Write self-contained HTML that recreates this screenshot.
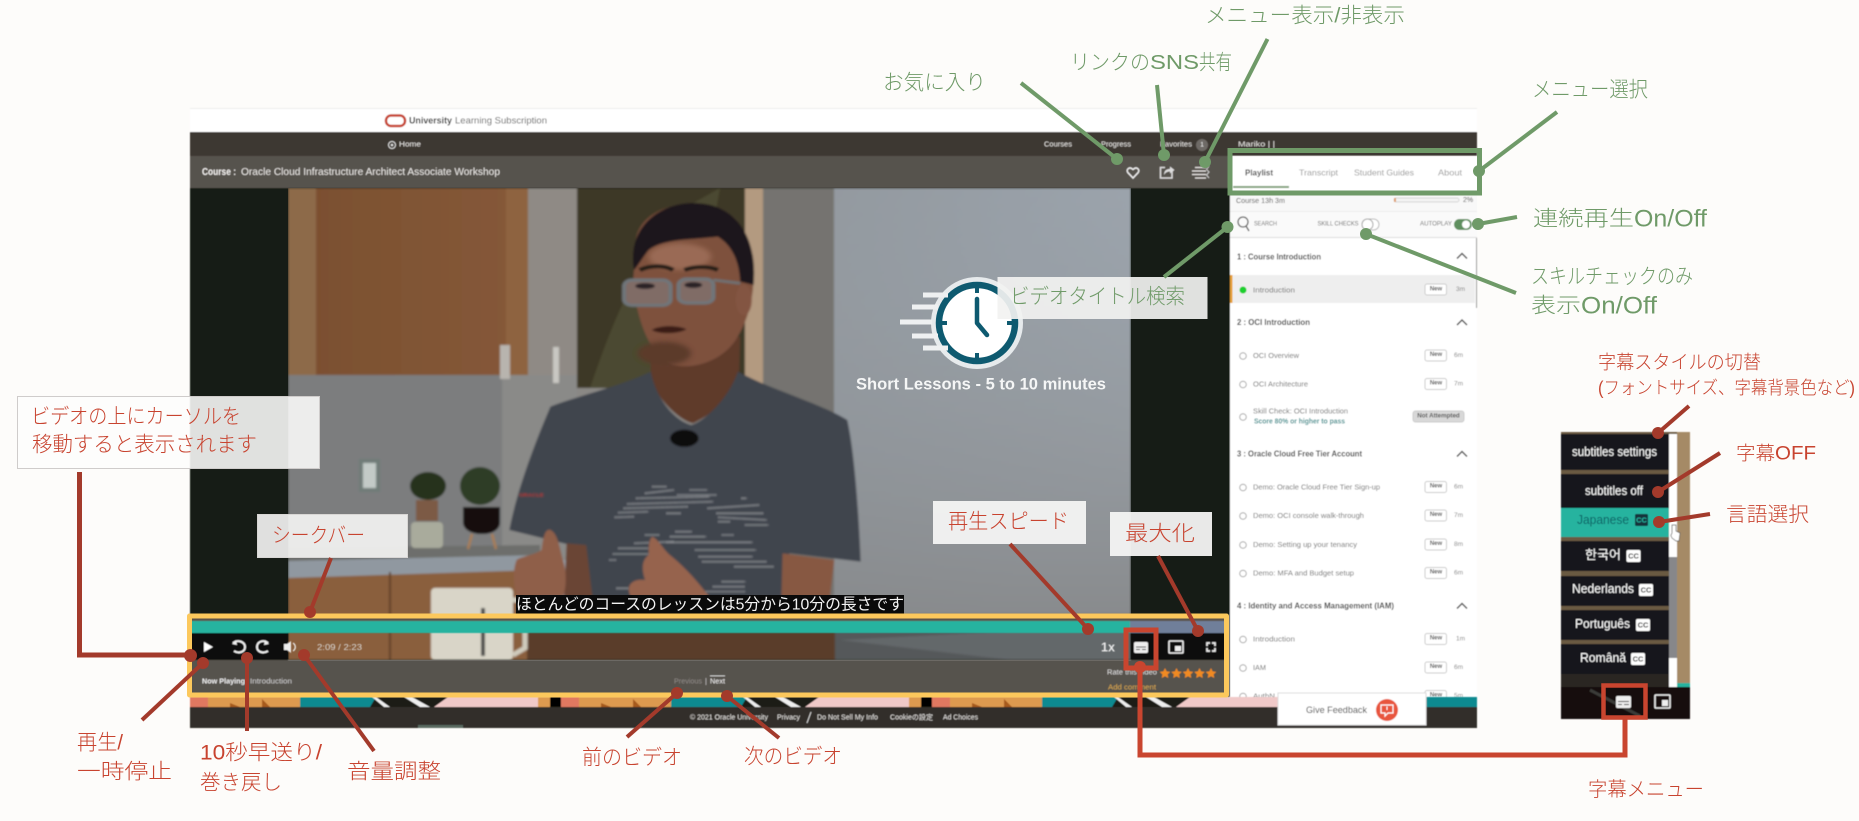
<!DOCTYPE html>
<html lang="ja"><head><meta charset="utf-8"><title>Video player guide</title>
<style>
html,body{margin:0;padding:0;width:1859px;height:821px;overflow:hidden;background:#fdfcfa}
svg{display:block}
text{font-family:"Liberation Sans","Noto Sans CJK JP",sans-serif;dominant-baseline:central}
.a{font-size:21px;font-weight:300}
.r{fill:#c8432f}.g{fill:#6f9a68}
.s{font-size:7.5px;fill:#707070}
.h{font-size:8px;fill:#444;font-weight:700}
.n{font-size:7px;fill:#e8e6e3}
.b{font-size:6px;font-weight:700;fill:#555;text-anchor:middle}
.t{font-size:6.5px;fill:#808080}
.m{font-size:12.5px;fill:#fff}
</style></head><body>
<svg width="1859" height="821" viewBox="0 0 1859 821" xmlns="http://www.w3.org/2000/svg">
<defs>
<filter id="f1" x="-5%" y="-5%" width="110%" height="110%"><feGaussianBlur stdDeviation="1.1"/></filter>
<filter id="f2" x="-5%" y="-5%" width="110%" height="110%"><feGaussianBlur stdDeviation="0.4"/></filter>
<filter id="f3" x="-30%" y="-30%" width="160%" height="160%"><feGaussianBlur stdDeviation="6"/></filter>
<linearGradient id="wall" x1="0" y1="0" x2="1" y2="0.6"><stop offset="0" stop-color="#85878a"/><stop offset="0.7" stop-color="#9aa2aa"/><stop offset="1" stop-color="#a2abb4"/></linearGradient>
<linearGradient id="wall2" x1="0" y1="0" x2="0" y2="1"><stop offset="0" stop-color="#8a8d90" stop-opacity="0"/><stop offset="1" stop-color="#808080" stop-opacity=".85"/></linearGradient>
<linearGradient id="wood" x1="0" y1="0" x2="1" y2="0"><stop offset="0" stop-color="#7a4f2e"/><stop offset="1" stop-color="#86593a"/></linearGradient>
<clipPath id="vid"><rect x="288" y="188" width="843" height="472"/></clipPath>
<clipPath id="stripc"><rect x="190" y="697" width="1287" height="10"/></clipPath>
</defs>

<rect width="1859" height="821" fill="#fdfcfa"/>

<!-- page frame -->
<g filter="url(#f2)">
<rect x="190" y="108" width="1287" height="1" fill="#eeeeec"/>
<rect x="190" y="109" width="1287" height="23" fill="#fff"/>
<rect x="190" y="132" width="1287" height="24" fill="#3c3733"/>
<rect x="190" y="156" width="1040" height="32" fill="#57524e"/>
<rect x="190" y="188" width="1040" height="472" fill="#141a16"/>
<rect x="386" y="115.500" width="19" height="10.500" rx="5" fill="none" stroke="#c74634" stroke-width="2.500"/>
<text x="409" y="121" font-size="9.500" font-weight="700" fill="#333" textLength="43" lengthAdjust="spacingAndGlyphs">University</text>
<text x="455" y="121" font-size="9.500" fill="#666" textLength="92" lengthAdjust="spacingAndGlyphs">Learning Subscription</text>
<circle cx="392" cy="145" r="3.500" fill="none" stroke="#ddd" stroke-width="1"/><circle cx="392" cy="145" r="1.300" fill="#ddd"/>
<text class="n" x="399" y="145" textLength="22" lengthAdjust="spacingAndGlyphs">Home</text>
<text class="n" x="1044" y="145" textLength="28" lengthAdjust="spacingAndGlyphs">Courses</text>
<text class="n" x="1101" y="145" textLength="30" lengthAdjust="spacingAndGlyphs">Progress</text>
<text class="n" x="1160" y="145" textLength="32" lengthAdjust="spacingAndGlyphs">Favorites</text>
<circle cx="1202" cy="145" r="6" fill="#6e6a66"/><text x="1202" y="145" font-size="6.500" fill="#eee" text-anchor="middle">1</text>
<text class="n" x="1238" y="145" textLength="37" lengthAdjust="spacingAndGlyphs">Mariko | |</text>
<text x="202" y="172" font-size="10.500" font-weight="700" fill="#f2f0ee" textLength="34" lengthAdjust="spacingAndGlyphs">Course :</text>
<text x="241" y="172" font-size="10.500" fill="#e8e6e3" textLength="259" lengthAdjust="spacingAndGlyphs">Oracle Cloud Infrastructure Architect Associate Workshop</text>
<path d="M1133 178 L1127.800 172.500 C1125.800 169.500 1129.500 166 1133 169.500 C1136.500 166 1140.200 169.500 1138.200 172.500 Z" fill="none" stroke="#eee" stroke-width="1.500"/>
<path d="M1172 171 V178 H1160.500 V167.500 H1165" fill="none" stroke="#ddd" stroke-width="1.500"/>
<path d="M1164 175 C1164 170 1167 169 1170 169 V166.500 L1174.500 170 L1170 173.500 V171.500 C1168 171.500 1165.500 172 1164 175 Z" fill="#ddd"/>
<path d="M1195 167.500 H1206 M1192 171 H1206 M1192 174.500 H1206 M1195 178 H1206" stroke="#e8e6e3" stroke-width="1.300"/>
<path d="M1209 166 L1206.500 169.500 L1209 172 L1206.500 175 L1209 178" fill="none" stroke="#ccc" stroke-width="1"/>
</g>

<!-- video content -->
<g clip-path="url(#vid)">
<g filter="url(#f1)">
<rect x="288" y="188" width="843" height="472" fill="url(#wall)"/>
<rect x="834" y="188" width="297" height="472" fill="url(#wall2)"/>
<rect x="528" y="188" width="49" height="210" fill="#8f8a85"/>
<rect x="288" y="375" width="214" height="185" fill="#7c7d7e"/>
<rect x="502" y="375" width="75" height="185" fill="#8a8a88"/>
<rect x="577" y="188" width="168" height="200" fill="#3d3727"/>
<path d="M590 388 C620 300 640 260 690 205 L720 188 L700 300 L660 388Z" fill="#4b4a30"/>
<rect x="745" y="188" width="18" height="210" fill="#b39a80"/>
<rect x="763" y="188" width="71" height="472" fill="#75736f"/>
<rect x="577" y="388" width="186" height="200" fill="#8a8885"/>
<rect x="288" y="188" width="240" height="187" fill="url(#wood)"/>
<rect x="288" y="188" width="28" height="187" fill="#8d6a48"/>
<rect x="506" y="188" width="22" height="187" fill="#8e643f"/>
<path d="M288 548 L540 545 V556 L288 562Z" fill="#6d6e6c"/>
<path d="M288 561 L540 555 V570 L288 578Z" fill="#9098a0"/>
<path d="M288 578 L540 570 V660 H288Z" fill="#8a5f3c"/>
<rect x="389" y="572" width="2" height="88" fill="#5f4028"/>
<rect x="500" y="345" width="10" height="34" fill="#b8b4ae"/>
<rect x="553" y="347" width="6" height="36" fill="#c9c7c2"/>
<rect x="359" y="459" width="21" height="33" fill="#6f7c78"/>
<rect x="363" y="463" width="13" height="25" fill="#c3cac7"/>
<!-- plants -->
<ellipse cx="428" cy="486" rx="18" ry="14" fill="#26331f"/>
<rect x="416" y="500" width="22" height="21" fill="#7c5a44"/>
<rect x="411" y="522" width="32" height="26" rx="4" fill="#a9ab9c"/>
<ellipse cx="480" cy="486" rx="20" ry="19" fill="#2f3e28"/>
<path d="M463 507 H500 V522 C500 530 492 534 482 534 C472 534 463 530 463 522Z" fill="#15110f"/>
<path d="M472 534 L468 549 M492 534 L496 549" stroke="#a97d55" stroke-width="2.500"/>
<!-- person: head, neck, shirt -->
<g transform="translate(450,190) scale(.4464,.3333)">
<path d="M450 480 L450 570 C470 640 520 695 545 700 C590 670 640 620 648 540 L650 440Z" fill="#5f3b2c"/>
<path d="M450 545 C380 590 280 620 225 650 C190 760 150 900 133 1020 L300 1075 L325 1300 L750 1300 L760 1090 L920 1115 C915 950 905 780 890 690 C830 640 720 600 645 545 C620 640 560 700 540 705 C500 690 460 620 450 545Z" fill="#3f444d"/>
<path d="M415 180 C410 70 500 35 560 40 C640 50 680 130 680 260 C680 330 665 400 640 450 C610 510 550 540 500 525 C450 500 420 400 410 280Z" fill="#7e513d"/>
<ellipse cx="515" cy="200" rx="70" ry="40" fill="#9a6a54" filter="url(#f3)"/>
<ellipse cx="480" cy="490" rx="60" ry="35" fill="#5c3a2c" filter="url(#f3)"/>
<ellipse cx="658" cy="330" rx="18" ry="46" fill="#835542"/>
<path d="M412 240 C395 100 480 30 560 40 C640 48 690 140 680 285 L650 275 C648 210 630 165 600 140 C540 150 480 145 445 180 C430 205 420 230 412 240Z" fill="#1b191b"/>
<path d="M425 240 C450 225 480 225 500 240 M525 240 C550 228 580 228 600 240" fill="none" stroke="#221a18" stroke-width="12"/>
<rect x="390" y="270" width="104" height="76" rx="18" fill="#806c66" stroke="#6f767a" stroke-width="9"/>
<rect x="512" y="267" width="78" height="72" rx="18" fill="#806c66" stroke="#6f767a" stroke-width="9"/>
<path d="M590 270 L650 280" stroke="#6e7274" stroke-width="8"/>
<ellipse cx="437" cy="288" rx="22" ry="9" fill="#2c2426"/><ellipse cx="545" cy="285" rx="20" ry="9" fill="#2c2426"/>
<path d="M452 420 C470 405 510 405 530 418 C510 432 470 434 452 420Z" fill="#3a1a18"/>
<ellipse cx="525" cy="745" rx="32" ry="26" fill="#111"/>
<text x="155" y="917" font-size="13" font-weight="700" fill="#b5342c">ORACLE</text>
</g>
<!-- arm, shirt print and hands -->
<g transform="translate(288,380) scale(.3571,.3333)">
<path d="M780 490 L835 495 L860 720 L770 720Z" fill="#6a4534"/>
<path d="M1385 520 L1530 540 L1510 720 H1380Z" fill="#875842"/>
<g fill="none" stroke="#c8cacc" stroke-width="4" stroke-dasharray="4 3" opacity=".8">
<path d="M1020 320 H1060 M1000 340 L1080 330 M975 355 L1180 350 M950 372 L1190 365 M940 385 L1120 380 M925 398 L1010 395 M915 412 L970 410 M1125 330 H1175 M1090 345 H1200 M1270 355 H1285 M1175 385 L1320 375 M1200 400 H1330 M1205 412 L1340 420 M1205 425 H1240 M1280 435 H1345 M1060 400 H1100"/>
<path d="M1000 465 H1040 M1085 455 H1130 M1070 470 H1170 M1215 465 H1250 M970 490 L1080 485 M1060 487 H1300 M925 505 L1020 505 M1140 510 H1310 M910 522 H1010 M1150 530 H1300 M1160 545 H1340 M1250 560 H1360 M900 540 H920 M1215 605 H1280 M1190 620 H1280 M920 625 H1000 M1170 635 H1280"/>
</g>
<path d="M640 540 C650 530 690 525 710 510 C715 470 720 445 735 450 C755 460 760 500 770 540 C785 590 775 640 770 650 H640 C630 600 630 570 640 540Z" fill="#8f5f4a"/>
<path d="M1020 470 C1040 480 1050 510 1075 530 C1120 570 1150 610 1180 650 H960 C945 620 960 595 1000 600 C990 570 990 540 1010 525 C1010 500 1010 480 1020 470Z" fill="#96634e"/>
</g>
<!-- lower zone and mug -->
<rect x="527" y="614" width="308" height="46" fill="#5a3c2c"/>
<rect x="835" y="614" width="296" height="46" fill="#55585a"/>
<path d="M840 640 L1010 660 H1131 V625Z" fill="#63676a"/>
<rect x="431" y="588" width="82" height="72" rx="4" fill="#d9d5c8"/>
<path d="M513 600 H525 V648 L513 655" fill="none" stroke="#cfcabc" stroke-width="5"/>
<rect x="481" y="608" width="4" height="48" fill="#4a4a48"/>
</g>
<circle cx="977" cy="323" r="46" fill="#e6eaec"/>
<circle cx="977" cy="323" r="38" fill="#fff" stroke="#0e5a70" stroke-width="6.500"/>
<path d="M977 285 V293 M977 353 V361 M939 323 H947 M1007 323 H1015" stroke="#0e5a70" stroke-width="4"/>
<path d="M977 299 V323 L987 335" fill="none" stroke="#0e5a70" stroke-width="4.500" stroke-linecap="round" stroke-linejoin="round"/>
<path d="M923 295 H948 M912 307 H938 M900 322 H932 M912 336 H938 M923 348 H948" stroke="#eef0f1" stroke-width="5"/>
<text x="856" y="384" font-size="17" font-weight="700" fill="#f5f6f6" textLength="250" lengthAdjust="spacingAndGlyphs">Short Lessons - 5 to 10 minutes</text>
</g>

<!-- subtitle -->
<rect x="516" y="595" width="388" height="21" fill="#0a0a0a"/>
<text x="516" y="605" font-size="16" fill="#f4f4f4" textLength="388" lengthAdjust="spacingAndGlyphs">ほとんどのコースのレッスンは5分から10分の長さです</text>

<!-- controls -->
<g filter="url(#f2)">
<rect x="190" y="633" width="98" height="27" fill="#0a0a0a"/>
<rect x="1131" y="633" width="97" height="27" fill="#0a0a0a"/>
<rect x="190" y="616" width="1038" height="5" fill="#5c5248"/>
<rect x="190" y="621" width="940" height="12" fill="#25b39f"/>
<rect x="1130" y="621" width="98" height="12" fill="#6f7f9a"/>
<path d="M204 642 L213 647 L204 652Z" fill="#fff"/>
<path d="M233 643 C238 639 245 642 245 647 C245 652 239 654 234 651" fill="none" stroke="#eee" stroke-width="2"/><path d="M236 640 L232 644 L237 645Z" fill="#eee"/>
<path d="M268 643 C263 639 257 642 257 647 C257 652 263 654 268 651" fill="none" stroke="#eee" stroke-width="2"/><path d="M265 640 L269 644 L264 645Z" fill="#eee"/>
<path d="M284 644 H287 L291 641 V653 L287 650 H284Z" fill="#eee"/><path d="M293 643 C296 645 296 649 293 651" fill="none" stroke="#eee" stroke-width="1.300"/>
<text x="317" y="647" font-size="8.500" fill="#ddd" textLength="45" lengthAdjust="spacingAndGlyphs">2:09  /  2:23</text>
<text x="1101" y="647" font-size="13" fill="#e8e8e8" font-weight="700" textLength="14" lengthAdjust="spacingAndGlyphs">1x</text>
<rect x="1134" y="642" width="14" height="11" rx="1.500" fill="#eee"/>
<path d="M1136 649.500 H1140 M1142 649.500 H1146 M1136 647 H1146" stroke="#222" stroke-width="1"/>
<rect x="1169" y="641" width="14" height="12" rx="1" fill="none" stroke="#eee" stroke-width="1.600"/><rect x="1175" y="646" width="6" height="5" fill="#eee"/>
<path d="M1207 646 V643 H1210 M1212 643 H1215 V646 M1215 648 V651 H1212 M1210 651 H1207 V648" fill="none" stroke="#eee" stroke-width="1.700"/>
<rect x="190" y="660" width="1040" height="37" fill="#57524e"/>
<text x="202" y="681" font-size="7.500" font-weight="700" fill="#eee" textLength="43" lengthAdjust="spacingAndGlyphs">Now Playing</text>
<text x="250" y="681" font-size="7.500" fill="#ccc" textLength="42" lengthAdjust="spacingAndGlyphs">Introduction</text>
<text x="674" y="681" font-size="7.500" fill="#8f8b87" textLength="28" lengthAdjust="spacingAndGlyphs">Previous</text>
<text x="705" y="681" font-size="7.500" fill="#ccc">|</text>
<text x="710" y="681" font-size="7.500" fill="#f0f0f0" text-decoration="underline" textLength="15" lengthAdjust="spacingAndGlyphs">Next</text>
<text x="1107" y="673" font-size="7" fill="#ddd" textLength="50" lengthAdjust="spacingAndGlyphs">Rate this video</text>
<text x="1108" y="688" font-size="7" fill="#d9a84e" textLength="48" lengthAdjust="spacingAndGlyphs">Add comment</text>
<g fill="#f08a24">
<path d="M1165 668 L1166.600 671.400 L1170.300 671.900 L1167.600 674.400 L1168.300 678 L1165 676.200 L1161.700 678 L1162.400 674.400 L1159.700 671.900 L1163.400 671.400Z"/>
<path transform="translate(11.500,0)" d="M1165 668 L1166.600 671.400 L1170.300 671.900 L1167.600 674.400 L1168.300 678 L1165 676.200 L1161.700 678 L1162.400 674.400 L1159.700 671.900 L1163.400 671.400Z"/>
<path transform="translate(23,0)" d="M1165 668 L1166.600 671.400 L1170.300 671.900 L1167.600 674.400 L1168.300 678 L1165 676.200 L1161.700 678 L1162.400 674.400 L1159.700 671.900 L1163.400 671.400Z"/>
<path transform="translate(34.500,0)" d="M1165 668 L1166.600 671.400 L1170.300 671.900 L1167.600 674.400 L1168.300 678 L1165 676.200 L1161.700 678 L1162.400 674.400 L1159.700 671.900 L1163.400 671.400Z"/>
<path transform="translate(46,0)" d="M1165 668 L1166.600 671.400 L1170.300 671.900 L1167.600 674.400 L1168.300 678 L1165 676.200 L1161.700 678 L1162.400 674.400 L1159.700 671.900 L1163.400 671.400Z"/>
</g>
</g>

<!-- sidebar -->
<g filter="url(#f2)">
<rect x="1230" y="156" width="247" height="572" fill="#fff"/>
<rect x="1228" y="188" width="2" height="509" fill="#141a16"/>
<text x="1245" y="172.500" font-size="8.500" font-weight="700" fill="#444" textLength="28" lengthAdjust="spacingAndGlyphs">Playlist</text>
<rect x="1233" y="186" width="56" height="2" fill="#7fa07a"/>
<text x="1299" y="172.500" font-size="8.500" fill="#999" textLength="39" lengthAdjust="spacingAndGlyphs">Transcript</text>
<text x="1354" y="172.500" font-size="8.500" fill="#999" textLength="60" lengthAdjust="spacingAndGlyphs">Student Guides</text>
<text x="1438" y="172.500" font-size="8.500" fill="#999" textLength="24" lengthAdjust="spacingAndGlyphs">About</text>
<rect x="1230" y="195" width="247" height="17" fill="#f8f8f8"/>
<text x="1236" y="200.500" font-size="7.500" fill="#555" textLength="49" lengthAdjust="spacingAndGlyphs">Course 13h 3m</text>
<rect x="1394" y="198" width="65" height="4" rx="2" fill="#f3f3f3" stroke="#ccc" stroke-width=".7"/><rect x="1394" y="198" width="2" height="4" fill="#e0a070"/>
<text x="1463" y="200.500" font-size="7" fill="#555">2%</text>
<rect x="1230" y="212" width="247" height="25" fill="#fafafa"/><rect x="1230" y="211" width="247" height="1" fill="#eee"/><rect x="1230" y="237" width="247" height="1" fill="#ddd"/>
<circle cx="1243" cy="222" r="5" fill="none" stroke="#666" stroke-width="1.300"/><path d="M1246 226 L1249 231" stroke="#666" stroke-width="1.400"/>
<text x="1254" y="224.500" font-size="6" fill="#666" textLength="23" lengthAdjust="spacingAndGlyphs">SEARCH</text>
<text x="1317.500" y="224.500" font-size="6" fill="#666" textLength="41" lengthAdjust="spacingAndGlyphs">SKILL CHECKS</text>
<rect x="1362" y="219" width="17" height="11" rx="5.500" fill="#fff" stroke="#bbb"/><circle cx="1367.500" cy="224.500" r="5.500" fill="#fff" stroke="#aaa"/>
<text x="1420" y="224.500" font-size="6" fill="#666" textLength="32" lengthAdjust="spacingAndGlyphs">AUTOPLAY</text>
<rect x="1454" y="219" width="18" height="11" rx="5.500" fill="#5f8f5f"/><circle cx="1466" cy="224.500" r="4" fill="#fff"/>
<rect x="1476" y="238" width="1" height="70" fill="#999"/>

<text class="h" x="1237" y="257" textLength="84" lengthAdjust="spacingAndGlyphs">1 : Course Introduction</text>
<path d="M1457 258.500 L1462 253.500 L1467 258.500" fill="none" stroke="#555" stroke-width="1.500"/>
<rect x="1230" y="275" width="245" height="28" fill="#eeeeee"/><rect x="1230" y="275" width="2.500" height="28" fill="#e8a33a"/>
<circle cx="1243" cy="290" r="3.500" fill="#1fd02e"/>
<text class="s" x="1253" y="290" textLength="42" lengthAdjust="spacingAndGlyphs">Introduction</text>
<rect x="1425" y="284" width="21.500" height="11" rx="2" fill="#fff" stroke="#ccc"/><text class="b" x="1436" y="289.500">New</text>
<text class="t" x="1456" y="289.500">3m</text>

<text class="h" x="1237" y="322.500" textLength="73" lengthAdjust="spacingAndGlyphs">2 : OCI Introduction</text>
<path d="M1457 325 L1462 320 L1467 325" fill="none" stroke="#555" stroke-width="1.500"/>
<circle cx="1243" cy="356" r="3.300" fill="#fff" stroke="#aaa"/><text class="s" x="1253" y="355.500" textLength="46" lengthAdjust="spacingAndGlyphs">OCI Overview</text>
<rect x="1425" y="350" width="21.500" height="11" rx="2" fill="#fff" stroke="#ccc"/><text class="b" x="1436" y="355">New</text><text class="t" x="1454" y="355.500">6m</text>
<circle cx="1243" cy="384.500" r="3.300" fill="#fff" stroke="#aaa"/><text class="s" x="1253" y="384" textLength="55" lengthAdjust="spacingAndGlyphs">OCI Architecture</text>
<rect x="1425" y="378.500" width="21.500" height="11" rx="2" fill="#fff" stroke="#ccc"/><text class="b" x="1436" y="383.500">New</text><text class="t" x="1454" y="384">7m</text>
<circle cx="1243" cy="417" r="3.300" fill="#fff" stroke="#aaa"/><text class="s" x="1253" y="411" textLength="95" lengthAdjust="spacingAndGlyphs">Skill Check: OCI Introduction</text>
<text x="1254" y="422" font-size="7" font-weight="700" fill="#3f9090" textLength="91" lengthAdjust="spacingAndGlyphs">Score 80% or higher to pass</text>
<rect x="1413" y="411" width="51" height="11" rx="2.500" fill="#d8d8d8" stroke="#ccc"/><text class="b" x="1438.500" y="416" style="font-size:6.200px">Not Attempted</text>

<text class="h" x="1237" y="454" textLength="125" lengthAdjust="spacingAndGlyphs">3 : Oracle Cloud Free Tier Account</text>
<path d="M1457 456.500 L1462 451.500 L1467 456.500" fill="none" stroke="#555" stroke-width="1.500"/>
<circle cx="1243" cy="487.500" r="3.300" fill="#fff" stroke="#aaa"/><text class="s" x="1253" y="487" textLength="127" lengthAdjust="spacingAndGlyphs">Demo: Oracle Cloud Free Tier Sign-up</text>
<rect x="1425" y="481.500" width="21.500" height="11" rx="2" fill="#fff" stroke="#ccc"/><text class="b" x="1436" y="486.500">New</text><text class="t" x="1454" y="487">6m</text>
<circle cx="1243" cy="516" r="3.300" fill="#fff" stroke="#aaa"/><text class="s" x="1253" y="515.500" textLength="111" lengthAdjust="spacingAndGlyphs">Demo: OCI console walk-through</text>
<rect x="1425" y="510" width="21.500" height="11" rx="2" fill="#fff" stroke="#ccc"/><text class="b" x="1436" y="515">New</text><text class="t" x="1454" y="515.500">7m</text>
<circle cx="1243" cy="545" r="3.300" fill="#fff" stroke="#aaa"/><text class="s" x="1253" y="544.500" textLength="104" lengthAdjust="spacingAndGlyphs">Demo: Setting up your tenancy</text>
<rect x="1425" y="539" width="21.500" height="11" rx="2" fill="#fff" stroke="#ccc"/><text class="b" x="1436" y="544">New</text><text class="t" x="1454" y="544.500">8m</text>
<circle cx="1243" cy="573.500" r="3.300" fill="#fff" stroke="#aaa"/><text class="s" x="1253" y="573" textLength="101" lengthAdjust="spacingAndGlyphs">Demo: MFA and Budget setup</text>
<rect x="1425" y="567.500" width="21.500" height="11" rx="2" fill="#fff" stroke="#ccc"/><text class="b" x="1436" y="572.500">New</text><text class="t" x="1454" y="573">6m</text>

<text class="h" x="1237" y="606" textLength="157" lengthAdjust="spacingAndGlyphs">4 : Identity and Access Management (IAM)</text>
<path d="M1457 608.500 L1462 603.500 L1467 608.500" fill="none" stroke="#555" stroke-width="1.500"/>
<circle cx="1243" cy="639.500" r="3.300" fill="#fff" stroke="#aaa"/><text class="s" x="1253" y="639" textLength="42" lengthAdjust="spacingAndGlyphs">Introduction</text>
<rect x="1425" y="633.500" width="21.500" height="11" rx="2" fill="#fff" stroke="#ccc"/><text class="b" x="1436" y="638.500">New</text><text class="t" x="1456" y="639">1m</text>
<circle cx="1243" cy="668" r="3.300" fill="#fff" stroke="#aaa"/><text class="s" x="1253" y="667.500" textLength="13" lengthAdjust="spacingAndGlyphs">IAM</text>
<rect x="1425" y="662" width="21.500" height="11" rx="2" fill="#fff" stroke="#ccc"/><text class="b" x="1436" y="667">New</text><text class="t" x="1454" y="667.500">6m</text>
<circle cx="1243" cy="696.500" r="3.300" fill="#fff" stroke="#aaa"/><text class="s" x="1253" y="696" textLength="22" lengthAdjust="spacingAndGlyphs">AuthN</text>
<rect x="1425" y="690.500" width="21.500" height="11" rx="2" fill="#fff" stroke="#ccc"/><text class="b" x="1436" y="695.500">New</text><text class="t" x="1454" y="696">5m</text>
</g>

<!-- pattern strip + footer -->
<g filter="url(#f2)">
<g clip-path="url(#stripc)">
<rect x="190" y="697" width="1287" height="10" fill="#1a1a18"/>
<g>
<rect x="190" y="697" width="18" height="10" fill="#e07860"/><rect x="208" y="697" width="92" height="10" fill="#dd9a4f"/>
<path d="M230 703 l10 4 h-10Z M262 699 l8 8 h-8Z" fill="#a65a1e"/>
<path d="M300 697 H376 L370 707 H300Z" fill="#0e8a90"/>
<path d="M376 697 L390 707 H384 L372 697Z M412 697 L430 707 H420 L404 697Z" fill="#eeeeee"/>
<path d="M434 707 L448 697 H540 V707Z" fill="#f0c9c8"/><rect x="538" y="697" width="12" height="10" fill="#dd9a4f"/>
<rect x="550" y="697" width="11" height="10" fill="#000"/>
</g>
<g transform="translate(371,0)">
<rect x="190" y="697" width="18" height="10" fill="#e07860"/><rect x="208" y="697" width="92" height="10" fill="#dd9a4f"/>
<path d="M230 703 l10 4 h-10Z M262 699 l8 8 h-8Z" fill="#a65a1e"/>
<path d="M300 697 H376 L370 707 H300Z" fill="#0e8a90"/>
<path d="M376 697 L390 707 H384 L372 697Z M412 697 L430 707 H420 L404 697Z" fill="#eeeeee"/>
<path d="M434 707 L448 697 H540 V707Z" fill="#f0c9c8"/><rect x="538" y="697" width="12" height="10" fill="#dd9a4f"/>
<rect x="550" y="697" width="11" height="10" fill="#000"/>
</g>
<g transform="translate(742,0)">
<rect x="190" y="697" width="18" height="10" fill="#e07860"/><rect x="208" y="697" width="92" height="10" fill="#dd9a4f"/>
<path d="M230 703 l10 4 h-10Z M262 699 l8 8 h-8Z" fill="#a65a1e"/>
<path d="M300 697 H376 L370 707 H300Z" fill="#0e8a90"/>
<path d="M376 697 L390 707 H384 L372 697Z M412 697 L430 707 H420 L404 697Z" fill="#eeeeee"/>
<path d="M434 707 L448 697 H540 V707Z" fill="#f0c9c8"/><rect x="538" y="697" width="12" height="10" fill="#dd9a4f"/>
<rect x="550" y="697" width="11" height="10" fill="#000"/>
</g>
<g transform="translate(1113,0)">
<rect x="190" y="697" width="18" height="10" fill="#e07860"/><rect x="208" y="697" width="92" height="10" fill="#dd9a4f"/>
<path d="M300 697 H376 L370 707 H300Z" fill="#0e8a90"/>
</g>
</g>
<rect x="190" y="707" width="1287" height="21" fill="#322d2a"/>
<rect x="418" y="725" width="45" height="3" fill="#5a6a60"/>
<text class="n" x="690" y="718" textLength="78" lengthAdjust="spacingAndGlyphs">© 2021 Oracle University</text>
<text class="n" x="777" y="718" textLength="23" lengthAdjust="spacingAndGlyphs">Privacy</text>
<path d="M807 723 L811 712" stroke="#ddd" stroke-width="1"/>
<text class="n" x="817" y="718" textLength="61" lengthAdjust="spacingAndGlyphs">Do Not Sell My Info</text>
<text class="n" x="890" y="718" textLength="43" lengthAdjust="spacingAndGlyphs">Cookieの設定</text>
<text class="n" x="943" y="718" textLength="35" lengthAdjust="spacingAndGlyphs">Ad Choices</text>
<rect x="1278" y="693" width="148" height="32" fill="#fff" stroke="#ddd"/>
<text x="1306" y="710" font-size="9" fill="#444" textLength="61" lengthAdjust="spacingAndGlyphs">Give Feedback</text>
<circle cx="1387" cy="710" r="11" fill="#e8553c"/>
<path d="M1381 705 H1393 V713 H1388 L1385 716 V713 H1381Z" fill="none" stroke="#fff" stroke-width="1.200"/>
<rect x="1386.500" y="706.500" width="1" height="3.500" fill="#fff"/>
</g>

<!-- subtitle menu panel -->
<g filter="url(#f2)">
<rect x="1561" y="432" width="129" height="287" fill="#6b5a42"/>
<rect x="1677" y="432" width="13" height="251" fill="#a58a66"/>
<rect x="1677" y="683" width="13" height="4" fill="#25b39f"/>
<rect x="1669" y="434" width="8" height="253" fill="#fff"/>
<rect x="1669" y="557" width="8" height="101" fill="#87878a"/>
<rect x="1561" y="434" width="108" height="36" fill="#15181a"/>
<rect x="1561" y="474" width="108" height="34" fill="#15181a"/>
<rect x="1561" y="508" width="108" height="29" fill="#25b39f"/>
<rect x="1561" y="541" width="108" height="30" fill="#15181a"/>
<rect x="1561" y="576" width="108" height="30" fill="#15181a"/>
<rect x="1561" y="610" width="108" height="30" fill="#15181a"/>
<rect x="1561" y="644" width="108" height="30" fill="#15181a"/>
<rect x="1561" y="674" width="108" height="13" fill="#2a2620"/>
<rect x="1561" y="687" width="129" height="32" fill="#12100d"/>
<path d="M1590 690 L1640 716" stroke="#3a3a38" stroke-width="3"/>
<text class="m" x="1572" y="452" textLength="85" lengthAdjust="spacingAndGlyphs">subtitles settings</text>
<text class="m" x="1585" y="491" textLength="58" lengthAdjust="spacingAndGlyphs">subtitles off</text>
<text class="m" x="1577" y="520" textLength="52" lengthAdjust="spacingAndGlyphs" style="fill:#0f5f63">Japanese</text>
<rect x="1635" y="514" width="13" height="12" rx="1.500" fill="#17303a"/><text x="1641.500" y="520" font-size="7.500" font-weight="700" fill="#25b39f" text-anchor="middle">CC</text>
<text class="m" x="1585" y="555" textLength="36" lengthAdjust="spacingAndGlyphs">한국어</text>
<rect x="1626.500" y="550" width="14" height="12" rx="1.500" fill="#fff"/><text x="1633.500" y="556" font-size="7.500" font-weight="700" fill="#222" text-anchor="middle">CC</text>
<text class="m" x="1572" y="589" textLength="62" lengthAdjust="spacingAndGlyphs">Nederlands</text>
<rect x="1639" y="584" width="14" height="12" rx="1.500" fill="#fff"/><text x="1646" y="590" font-size="7.500" font-weight="700" fill="#222" text-anchor="middle">CC</text>
<text class="m" x="1575" y="624" textLength="55" lengthAdjust="spacingAndGlyphs">Português</text>
<rect x="1636" y="619" width="14" height="12" rx="1.500" fill="#fff"/><text x="1643" y="625" font-size="7.500" font-weight="700" fill="#222" text-anchor="middle">CC</text>
<text class="m" x="1580" y="658" textLength="46" lengthAdjust="spacingAndGlyphs">Română</text>
<rect x="1631" y="653" width="14" height="12" rx="1.500" fill="#fff"/><text x="1638" y="659" font-size="7.500" font-weight="700" fill="#222" text-anchor="middle">CC</text>
<path d="M1672 525 L1672 533 C1671 536 1670 534 1672 538 L1676 541 H1679 L1680 533 L1676 531 V525Z" fill="#fff" stroke="#555" stroke-width=".7"/>
<rect x="1616" y="696" width="15" height="12" rx="1.500" fill="#eee"/><path d="M1618 704.500 H1622 M1624 704.500 H1629 M1618 701.500 H1629" stroke="#222" stroke-width="1"/>
<rect x="1655" y="695" width="15" height="13" rx="1" fill="none" stroke="#eee" stroke-width="1.600"/><rect x="1662" y="700" width="6" height="6" fill="#eee"/>
</g>

<!-- yellow control frame -->
<rect x="189.500" y="616" width="1037" height="79" fill="none" stroke="#fcc85c" stroke-width="5" stroke-linejoin="round"/>

<!-- annotation boxes -->
<rect x="17.500" y="396.500" width="302" height="72" fill="#fdfdfc" fill-opacity=".88" stroke="#cfcccb"/>
<rect x="257.500" y="514.500" width="150" height="43" fill="#f6f6f5" fill-opacity=".9" stroke="#d8d6d4"/>
<rect x="933" y="501" width="153" height="43" fill="#f4f4f3" fill-opacity=".95"/>
<rect x="1110" y="512" width="102" height="44" fill="#f4f4f3" fill-opacity=".95"/>
<rect x="997.500" y="277" width="210" height="42" fill="#f2f2f1" fill-opacity=".92"/>

<!-- green annotations -->
<g stroke="#6f9a68" stroke-width="4" fill="none">
<rect x="1230" y="150.500" width="249.500" height="42.500" stroke-width="5"/>
<path d="M1021 83 L1117 159"/>
<path d="M1157 85 L1164 155"/>
<path d="M1267.500 39 L1205 162"/>
<path d="M1557 112 L1479 171"/>
<path d="M1517 217 L1478 224"/>
<path d="M1164 277 L1227.500 227"/>
<path d="M1516 293 L1366 234"/>
</g>
<g fill="#6f9a68">
<circle cx="1117" cy="159" r="6"/><circle cx="1164" cy="155" r="6"/><circle cx="1205" cy="162" r="6"/><circle cx="1479" cy="171" r="6"/><circle cx="1478" cy="224" r="6"/><circle cx="1227.500" cy="227" r="6"/><circle cx="1366" cy="234" r="6"/>
</g>
<text class="a g" x="1205" y="16" textLength="200" lengthAdjust="spacingAndGlyphs">メニュー表示/非表示</text>
<text class="a g" x="1070" y="63" textLength="80" lengthAdjust="spacingAndGlyphs">リンクの</text>
<text class="a g" x="1150" y="63" textLength="49" lengthAdjust="spacingAndGlyphs" style="font-size:20px">SNS</text>
<text class="a g" x="1199" y="63" textLength="33" lengthAdjust="spacingAndGlyphs">共有</text>
<text class="a g" x="883" y="83" textLength="103" lengthAdjust="spacingAndGlyphs">お気に入り</text>
<text class="a g" x="1532" y="90" textLength="116" lengthAdjust="spacingAndGlyphs">メニュー選択</text>
<text class="a g" x="1533" y="219" textLength="101" lengthAdjust="spacingAndGlyphs">連続再生</text>
<text class="a g" x="1634" y="219" textLength="73" lengthAdjust="spacingAndGlyphs" style="font-size:24px">On/Off</text>
<text class="a g" x="1531" y="277" textLength="162" lengthAdjust="spacingAndGlyphs">スキルチェックのみ</text>
<text class="a g" x="1531" y="306" textLength="50" lengthAdjust="spacingAndGlyphs">表示</text>
<text class="a g" x="1581" y="306" textLength="76" lengthAdjust="spacingAndGlyphs" style="font-size:24px">On/Off</text>
<text class="a g" x="1010" y="297" textLength="175" lengthAdjust="spacingAndGlyphs">ビデオタイトル検索</text>

<!-- red annotations -->
<g stroke="#a33a2b" stroke-width="4" fill="none">
<path d="M79.500 472 V655 H190" stroke-width="5"/>
<path d="M203 663 L142 720"/>
<path d="M247 658 V731"/>
<path d="M304 655 L374 751"/>
<path d="M331 558 L310 612"/>
<path d="M677 693 L627 737"/>
<path d="M727 696 L779 738"/>
<path d="M1010 544 L1088 629"/>
<path d="M1158 556 L1198 631"/>
<path d="M1689 406 L1658 433"/>
<path d="M1720 453 L1658 492"/>
<path d="M1710 514 L1659 522"/>
</g>
<g fill="#a33a2b">
<circle cx="190.500" cy="655.500" r="6.500"/><circle cx="203" cy="663" r="6"/><circle cx="247" cy="658" r="6"/><circle cx="304" cy="655" r="6"/><circle cx="310" cy="612" r="6"/><circle cx="677" cy="693" r="6"/><circle cx="727" cy="696" r="6"/><circle cx="1088" cy="629" r="6"/><circle cx="1198" cy="631" r="6"/><circle cx="1658" cy="433" r="6"/><circle cx="1658" cy="492" r="6"/><circle cx="1659" cy="522" r="6"/>
</g>
<g stroke="#c9452f" fill="none">
<rect x="1126" y="630" width="30" height="38" stroke-width="5"/>
<rect x="1603.500" y="685.500" width="42" height="32" stroke-width="4.500"/>
<path d="M1140 667 V755 H1625 V719" stroke-width="5"/>
</g>
<circle cx="1140" cy="667" r="6" fill="#c9452f"/>

<g>
<text class="a r" x="31" y="417" textLength="210" lengthAdjust="spacingAndGlyphs">ビデオの上にカーソルを</text>
<text class="a r" x="32" y="445" textLength="225" lengthAdjust="spacingAndGlyphs">移動すると表示されます</text>
<text class="a r" x="272" y="536" textLength="93" lengthAdjust="spacingAndGlyphs">シークバー</text>
<text class="a r" x="948" y="522" textLength="121" lengthAdjust="spacingAndGlyphs">再生スピード</text>
<text class="a r" x="1125" y="534" textLength="70" lengthAdjust="spacingAndGlyphs">最大化</text>
<text class="a r" x="77" y="743" textLength="46" lengthAdjust="spacingAndGlyphs">再生/</text>
<text class="a r" x="77" y="772" textLength="95" lengthAdjust="spacingAndGlyphs">一時停止</text>
<text class="a r" x="200" y="753" textLength="122" lengthAdjust="spacingAndGlyphs">10秒早送り/</text>
<text class="a r" x="200" y="783" textLength="82" lengthAdjust="spacingAndGlyphs">巻き戻し</text>
<text class="a r" x="347" y="772" textLength="94" lengthAdjust="spacingAndGlyphs">音量調整</text>
<text class="a r" x="582" y="758" textLength="100" lengthAdjust="spacingAndGlyphs">前のビデオ</text>
<text class="a r" x="744" y="757" textLength="98" lengthAdjust="spacingAndGlyphs">次のビデオ</text>
<text class="a r" x="1598" y="363" textLength="163" lengthAdjust="spacingAndGlyphs" style="font-size:19px">字幕スタイルの切替</text>
<text class="a r" x="1598" y="388" textLength="257" lengthAdjust="spacingAndGlyphs" style="font-size:18px">(フォントサイズ、字幕背景色など)</text>
<text class="a r" x="1736" y="454" textLength="39" lengthAdjust="spacingAndGlyphs" style="font-size:19px">字幕</text>
<text class="a r" x="1775" y="454" textLength="41" lengthAdjust="spacingAndGlyphs" style="font-size:19px">OFF</text>
<text class="a r" x="1726" y="515" textLength="83" lengthAdjust="spacingAndGlyphs" style="font-size:20px">言語選択</text>
<text class="a r" x="1588" y="790" textLength="116" lengthAdjust="spacingAndGlyphs" style="font-size:20px">字幕メニュー</text>
</g>
</svg>
</body></html>
